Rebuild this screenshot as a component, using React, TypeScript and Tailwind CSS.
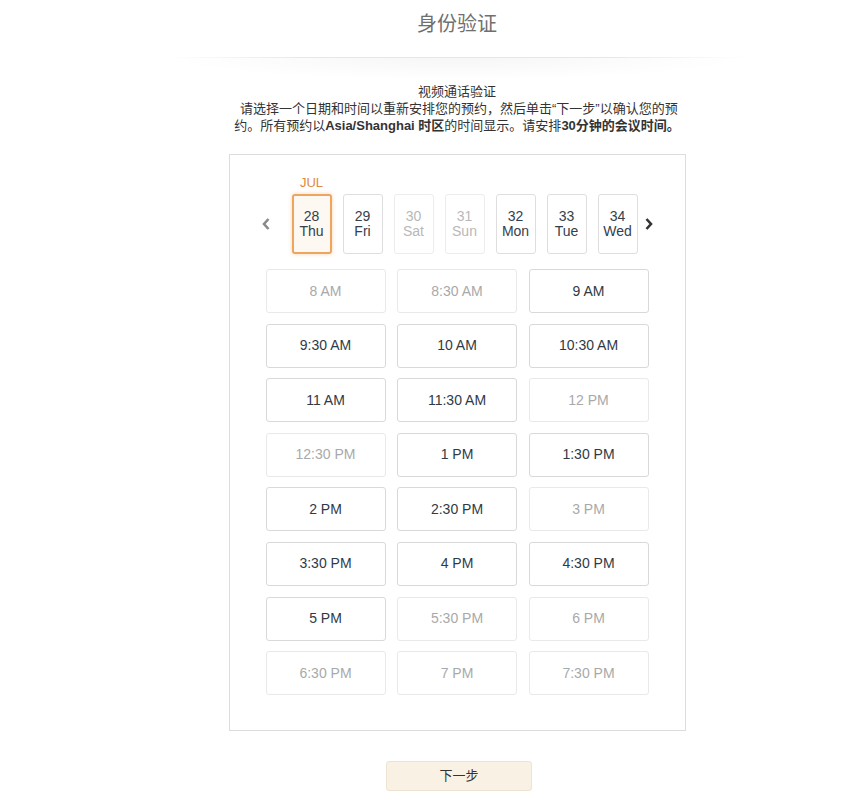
import React from "react";

const dates = [
  { d: "28", w: "Thu", state: "selected" },
  { d: "29", w: "Fri", state: "on" },
  { d: "30", w: "Sat", state: "off" },
  { d: "31", w: "Sun", state: "off" },
  { d: "32", w: "Mon", state: "on" },
  { d: "33", w: "Tue", state: "on" },
  { d: "34", w: "Wed", state: "on" },
];

const slots: [string, boolean][] = [
  ["8 AM", false],
  ["8:30 AM", false],
  ["9 AM", true],
  ["9:30 AM", true],
  ["10 AM", true],
  ["10:30 AM", true],
  ["11 AM", true],
  ["11:30 AM", true],
  ["12 PM", false],
  ["12:30 PM", false],
  ["1 PM", true],
  ["1:30 PM", true],
  ["2 PM", true],
  ["2:30 PM", true],
  ["3 PM", false],
  ["3:30 PM", true],
  ["4 PM", true],
  ["4:30 PM", true],
  ["5 PM", true],
  ["5:30 PM", false],
  ["6 PM", false],
  ["6:30 PM", false],
  ["7 PM", false],
  ["7:30 PM", false],
];

export default function App() {
  return (
    <div
      className="min-h-[805px] w-full bg-white pl-[49px] text-[#333]"
      style={{ fontFamily: '"Liberation Sans", Arial, "Noto Sans CJK SC", sans-serif' }}
    >
      <div className="h-[57px] pt-[12px]">
        <h1 className="text-center text-[20px] leading-[24px] text-[#6f6f6f] font-normal">身份验证</h1>
      </div>
      <div className="relative mx-auto w-[580px]">
        <div className="h-[1px] w-full bg-[linear-gradient(to_right,rgba(230,230,230,0),#e6e6e6_25%,#e6e6e6_75%,rgba(230,230,230,0))]" />
        <div className="h-[22px] w-full bg-[radial-gradient(ellipse_at_top,rgba(0,0,0,0.035),rgba(0,0,0,0)_70%)]" />
      </div>

      <div className="mt-[3px] text-center text-[13px] leading-[17px] text-[#333]">
        <div>视频通话验证</div>
        <div>&nbsp;请选择一个日期和时间以重新安排您的预约，然后单击“下一步”以确认您的预</div>
        <div>
          约。所有预约以<b>Asia/Shanghai 时区</b>的时间显示。请安排<b>30分钟的会议时间。</b>
        </div>
      </div>

      <div className="mx-auto mt-[20px] w-[457px] border border-[#dcdcdc] px-[36px] pb-[35px] pt-[20px]">
        <div className="flex items-end">
          <div className="ml-[-5px] flex h-[60px] w-[16px] items-center justify-center text-[#8a8a8a]">
            <svg width="10" height="14" viewBox="0 0 10 14">
              <path d="M7.5 2 L3 7 L7.5 12" fill="none" stroke="currentColor" strokeWidth="2.6" />
            </svg>
          </div>
          <div className="ml-[21px] flex gap-[11px]">
            {dates.map((x, i) => (
              <div key={i} className="flex w-[40px] flex-col items-center">
                <div className="mb-[3px] h-[16px] text-[13px] leading-[16px] text-[#e0893e]">{i === 0 ? "JUL" : ""}</div>
                <div
                  className={
                    "flex h-[60px] w-[40px] flex-col items-center justify-center rounded-[3px] text-[14px] leading-[15px] " +
                    (x.state === "selected"
                      ? "border-2 border-[#eda660] bg-[#fdf8f2] text-[#34404d] shadow-[0_0_4px_rgba(237,166,96,0.45)]"
                      : x.state === "on"
                      ? "border border-[#dedede] text-[#34404d]"
                      : "border border-[#ececec] text-[#b8b8b8]")
                  }
                >
                  <span>{x.d}</span>
                  <span>{x.w}</span>
                </div>
              </div>
            ))}
          </div>
          <div className="ml-[6px] flex h-[60px] w-[16px] items-center justify-center text-[#333]">
            <svg width="10" height="14" viewBox="0 0 10 14">
              <path d="M2.5 2 L7 7 L2.5 12" fill="none" stroke="currentColor" strokeWidth="2.6" />
            </svg>
          </div>
        </div>

        <div className="mt-[15px] grid grid-cols-3 gap-x-[11.5px] gap-y-[10.6px]">
          {slots.map(([t, on]) => (
            <div
              key={t}
              className={
                "flex h-[44px] items-center justify-center rounded-[3px] text-[14px] " +
                (on ? "border border-[#d9d9d9] text-[#2f3a45]" : "border border-[#e9e9e9] text-[#a9a9a9]")
              }
            >
              {t}
            </div>
          ))}
        </div>
      </div>

      <div className="mt-[30px] flex justify-center">
        <button className="ml-[4px] h-[30px] w-[146px] rounded-[3px] border border-[#ece3d3] bg-[#f8f1e4] text-[13px] text-[#333]">
          下一步
        </button>
      </div>
    </div>
  );
}
